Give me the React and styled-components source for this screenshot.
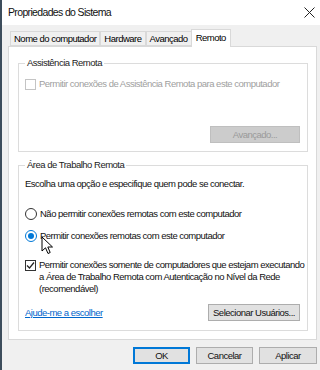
import React from "react";
import styled, { createGlobalStyle } from "styled-components";

const Global = createGlobalStyle`
  html, body { margin: 0; padding: 0; background: #f0f0f0; }
  body {
    font-family: "Liberation Sans", Arial, sans-serif;
    font-size: 9.5px;
    letter-spacing: -0.5px;
    color: #000;
  }
  * { box-sizing: border-box; }
`;

const Window = styled.div`
  width: 320px;
  height: 370px;
  display: flex;
  flex-direction: column;
  background: #f0f0f0;
  border-left: 2px solid #3d4d5c;
  position: relative;
  overflow: hidden;
`;

const TitleBar = styled.div`
  height: 25px;
  background: #fff;
  display: flex;
  align-items: center;
  justify-content: space-between;
  padding: 0 4px 1px 6px;
  font-size: 10.5px;
  letter-spacing: -0.65px;
  color: #111;
`;

const CloseBtn = styled.div`
  width: 14px;
  height: 14px;
  display: flex;
  align-items: center;
  justify-content: center;
`;

const Body = styled.div`
  flex: 1;
  display: flex;
  flex-direction: column;
  padding: 3px 3px 0 6px;
`;

const TabStrip = styled.div`
  display: flex;
  align-items: flex-end;
  height: 18px;
  padding-left: 2px;
  position: relative;
  z-index: 1;
`;

const Tab = styled.div`
  height: ${p => (p.$active ? 18 : 15)}px;
  padding: 0 ${p => (p.$active ? 4 : 3)}px;
  display: flex;
  align-items: center;
  background: ${p => (p.$active ? "#fff" : "#f0f0f0")};
  border: 1px solid #d9d9d9;
  border-bottom: ${p => (p.$active ? "none" : "1px solid #d9d9d9")};
  margin-left: ${p => (p.$active ? "-1px" : "0")};
  margin-bottom: ${p => (p.$active ? "-1px" : "0")};
  & + & { border-left: ${p => (p.$active ? "1px solid #d9d9d9" : "none")}; }
  padding-bottom: ${p => (p.$active ? 3 : 0)}px;
`;

const Panel = styled.div`
  height: 294px;
  background: #fff;
  border: 1px solid #d9d9d9;
  padding: 10px 8px 0 9px;
  display: flex;
  flex-direction: column;
`;

const Group = styled.fieldset`
  margin: 0 0 ${p => p.$gap || 0}px;
  border: 1px solid #dcdcdc;
  padding: 0 7px ${p => p.$pb}px 6px;
  min-width: 0;
  display: flex;
  flex-direction: column;
`;

const Legend = styled.legend`
  line-height: 12px;
  padding: 0 2px;
  margin-left: 0;
  color: #222;
`;

const Text = styled.div`
  line-height: 12px;
  margin-top: ${p => p.$mt || 0}px;
  color: #111;
`;

const Row = styled.div`
  display: flex;
  align-items: ${p => (p.$top ? "flex-start" : "center")};
  gap: 3px;
  margin-top: ${p => p.$mt || 0}px;
  line-height: 12px;
  white-space: nowrap;
  color: ${p => (p.$disabled ? "#a0a0a0" : "#111")};
`;

const Check = styled.span`
  flex: none;
  width: 11px;
  height: 11px;
  border: 1px solid ${p => (p.$disabled ? "#c4c4c4" : "#333")};
  background: #fff;
  display: flex;
  align-items: center;
  justify-content: center;
  margin-top: ${p => (p.$top ? 1 : 0)}px;
`;

const Radio = styled.span`
  flex: none;
  width: 12px;
  height: 12px;
  border-radius: 50%;
  border: 1px solid ${p => (p.$on ? "#0078d7" : "#333")};
  background: #fff;
  display: flex;
  align-items: center;
  justify-content: center;
  &::after {
    content: "";
    display: ${p => (p.$on ? "block" : "none")};
    width: 6px;
    height: 6px;
    border-radius: 50%;
    background: #0078d7;
  }
`;

const ButtonRow = styled.div`
  display: flex;
  justify-content: ${p => (p.$between ? "space-between" : "flex-end")};
  align-items: center;
  margin-top: ${p => p.$mt || 0}px;
`;

const Button = styled.div`
  width: ${p => p.$w}px;
  height: 17px;
  display: flex;
  align-items: center;
  justify-content: center;
  white-space: nowrap;
  background: ${p => (p.$disabled ? "#cccccc" : "#e1e1e1")};
  color: ${p => (p.$disabled ? "#9a9a9a" : "#111")};
  border: ${p => (p.$primary ? "2px solid #0078d7" : `1px solid ${p.$disabled ? "#bfbfbf" : "#adadad"}`)};
`;

const Link = styled.span`
  color: #0066cc;
  text-decoration: underline;
`;

const Footer = styled.div`
  display: flex;
  justify-content: flex-end;
  gap: 6px;
  padding: 7px 0 0;
`;

const Cursor = styled.svg`
  position: absolute;
  left: 39px;
  top: 236px;
`;

const CheckMark = () => (
  <svg width="9" height="9" viewBox="0 0 9 9">
    <path d="M1 4.5 L3.5 7 L8 1.5" fill="none" stroke="#222" strokeWidth="1.2" />
  </svg>
);

export default function App() {
  return (
    <>
      <Global />
      <Window>
        <TitleBar>
          <span>Propriedades do Sistema</span>
          <CloseBtn>
            <svg width="11" height="11" viewBox="0 0 11 11">
              <path d="M0.5 0.5 L10.5 10.5 M10.5 0.5 L0.5 10.5" stroke="#222" strokeWidth="1" />
            </svg>
          </CloseBtn>
        </TitleBar>
        <Body>
          <TabStrip>
            <Tab>Nome do computador</Tab>
            <Tab>Hardware</Tab>
            <Tab>Avançado</Tab>
            <Tab $active>Remoto</Tab>
          </TabStrip>
          <Panel>
            <Group $pb={8} $gap={7}>
              <Legend>Assistência Remota</Legend>
              <Row $mt={9} $disabled>
                <Check $disabled />
                <span>Permitir conexões de Assistência Remota para este computador</span>
              </Row>
              <ButtonRow $mt={36}>
                <Button $w={90} $disabled>Avançado...</Button>
              </ButtonRow>
            </Group>
            <Group $pb={9}>
              <Legend>Área de Trabalho Remota</Legend>
              <Text $mt={7}>Escolha uma opção e especifique quem pode se conectar.</Text>
              <Row $mt={18}>
                <Radio />
                <span>Não permitir conexões remotas com este computador</span>
              </Row>
              <Row $mt={10}>
                <Radio $on />
                <span>Permitir conexões remotas com este computador</span>
              </Row>
              <Row $mt={17} $top>
                <Check $top><CheckMark /></Check>
                <span>
                  Permitir conexões somente de computadores que estejam executando
                  <br />
                  a Área de Trabalho Remota com Autenticação no Nível da Rede
                  <br />
                  (recomendável)
                </span>
              </Row>
              <ButtonRow $between $mt={9}>
                <Link>Ajude-me a escolher</Link>
                <Button $w={92}>Selecionar Usuários...</Button>
              </ButtonRow>
            </Group>
          </Panel>
          <Footer>
            <Button $w={57} $primary>OK</Button>
            <Button $w={57}>Cancelar</Button>
            <Button $w={58}>Aplicar</Button>
          </Footer>
        </Body>
        <Cursor width="14" height="20" viewBox="0 0 14 20">
          <path d="M1 1 L1 15 L4.5 11.8 L7 17.5 L9.2 16.5 L6.8 11 L11.5 11 Z" fill="#fff" stroke="#000" strokeWidth="1" strokeLinejoin="round" />
        </Cursor>
      </Window>
    </>
  );
}
